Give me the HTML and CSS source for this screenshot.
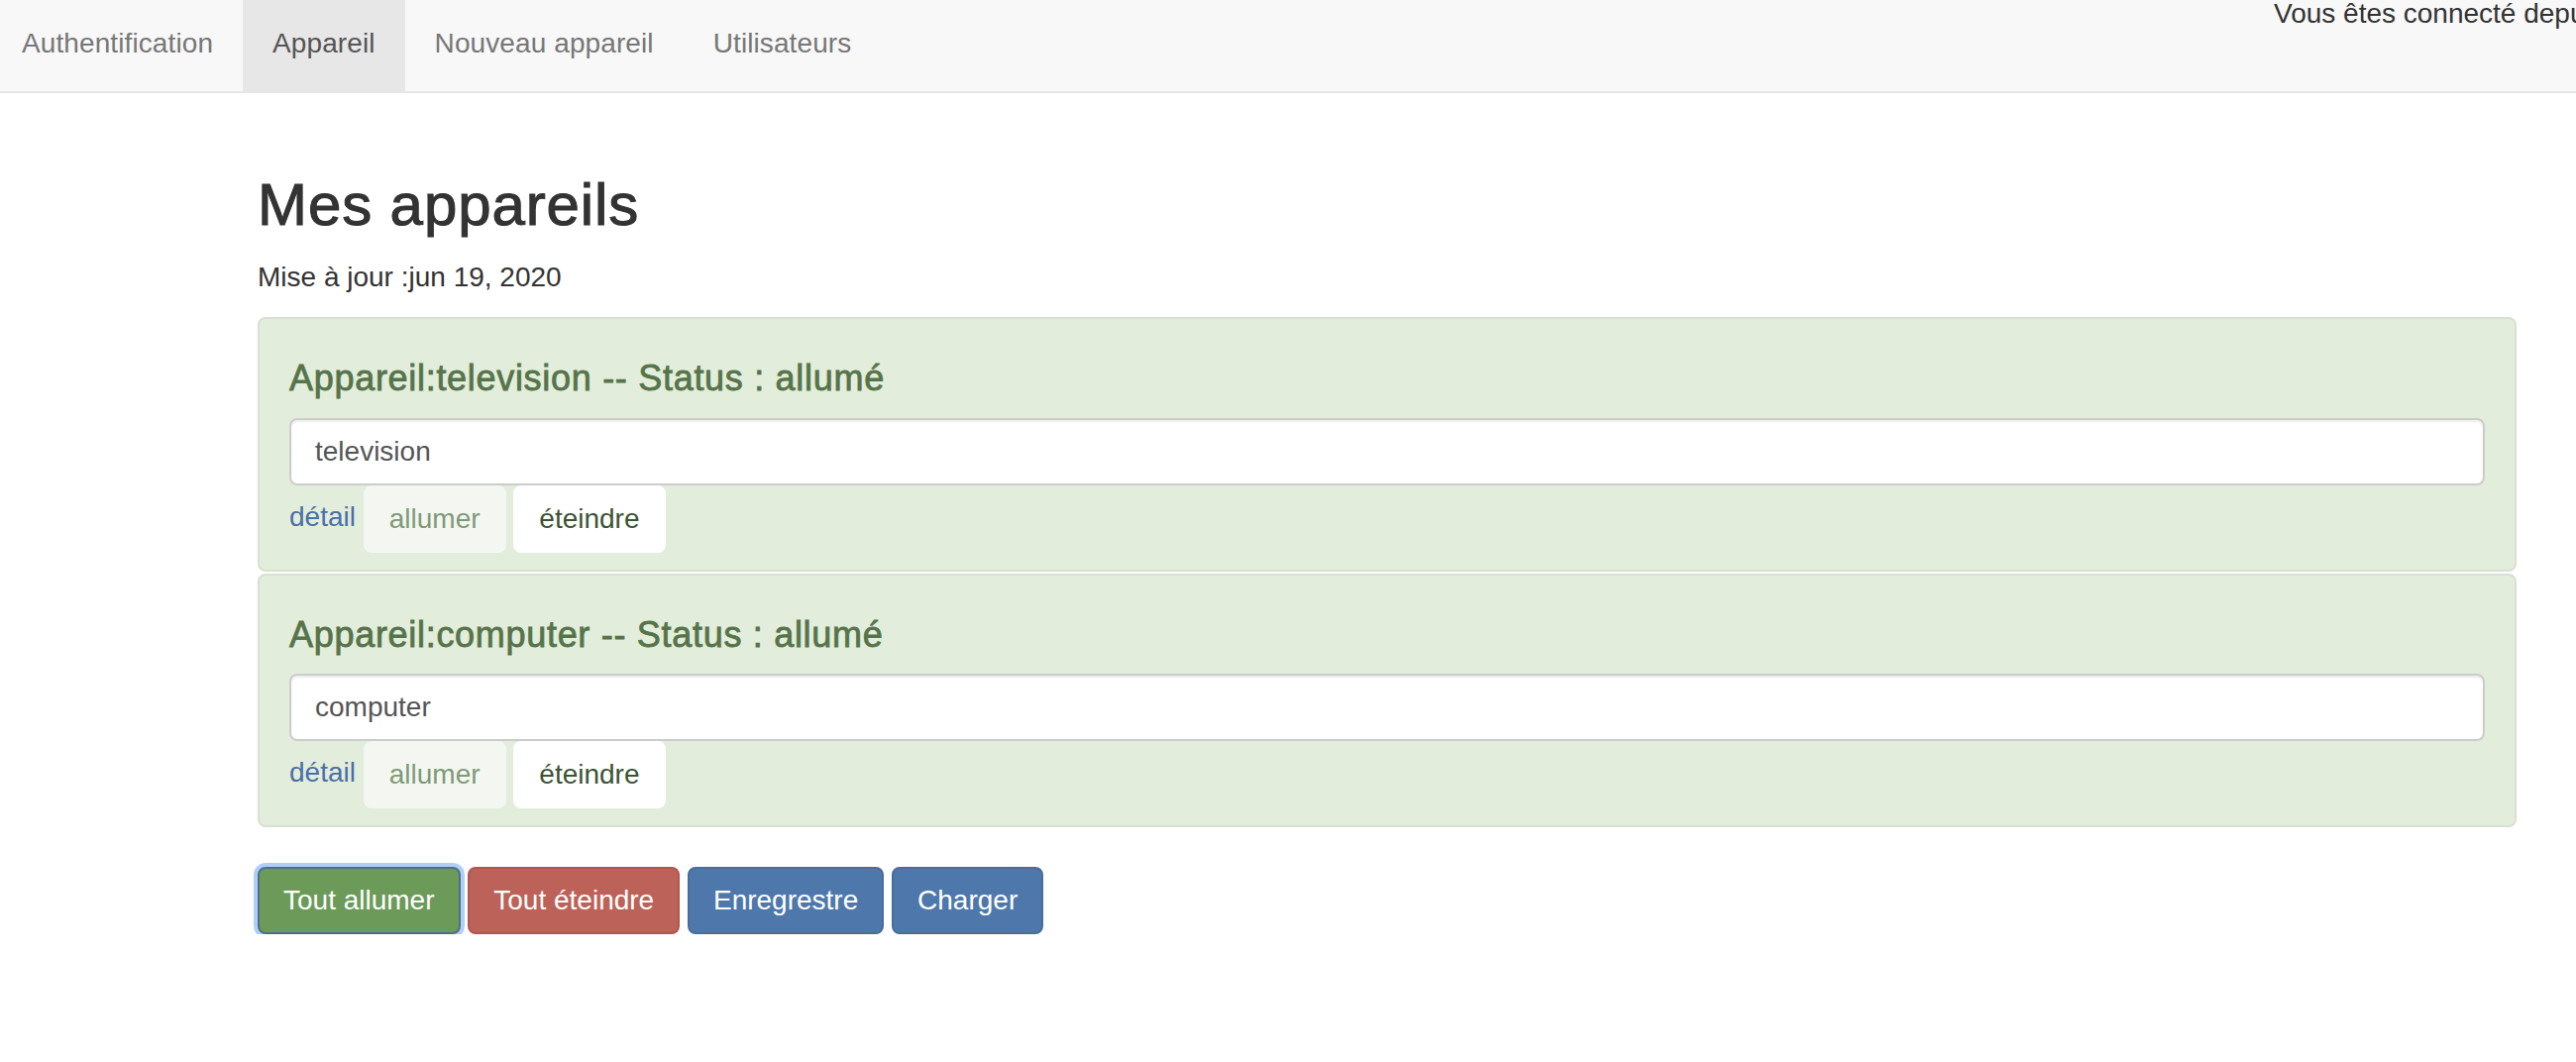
FILE: index.html
```html
<!DOCTYPE html>
<html lang="fr">
<head>
<meta charset="utf-8">
<title>Mes appareils</title>
<link rel="stylesheet" href="styles.css">
</head>
<body>
<nav class="navbar">
  <ul class="nav">
    <li><a href="#">Authentification</a></li>
    <li class="active"><a href="#">Appareil</a></li>
    <li><a href="#">Nouveau appareil</a></li>
    <li><a href="#">Utilisateurs</a></li>
  </ul>
  <p class="navbar-text">Vous êtes connecté depuis 0 secondes</p>
</nav>

<main class="container">
  <h2 class="title">Mes appareils</h2>
  <p class="updated">Mise à jour :jun 19, 2020</p>

  <ul class="list-group">
    <li class="list-item">
      <h4 class="item-heading">Appareil:television -- Status : allumé</h4>
      <input class="form-control" type="text" value="television">
      <div class="actions"><a class="link" href="#">détail</a> <button class="btn btn-off" disabled>allumer</button> <button class="btn btn-white">éteindre</button></div>
    </li>
    <li class="list-item">
      <h4 class="item-heading">Appareil:computer -- Status : allumé</h4>
      <input class="form-control" type="text" value="computer">
      <div class="actions"><a class="link" href="#">détail</a> <button class="btn btn-off" disabled>allumer</button> <button class="btn btn-white">éteindre</button></div>
    </li>
  </ul>

  <div class="toolbar"><button class="btn btn-success is-focused">Tout allumer</button> <button class="btn btn-danger">Tout éteindre</button> <button class="btn btn-primary">Enregrestre</button> <button class="btn btn-primary">Charger</button></div>
</main>
</body>
</html>
```

FILE: styles.css
```css
html, body {
  margin: 0;
  padding: 0;
  background: #ffffff;
  overflow: hidden;
}

body {
  font-family: "Liberation Sans", Arial, Helvetica, sans-serif;
  font-size: 28px;
  line-height: 40px;
  color: #333333;
}

.navbar {
  display: flex;
  height: 92px;
  background: #f8f8f8;
  border-bottom: 2px solid #e7e7e7;
  margin-bottom: 40px;
}

.nav {
  flex: 1;
  display: flex;
  list-style: none;
  margin: 0 0 0 -8px;
  padding: 0;
}

.nav a {
  display: block;
  padding: 24px 30px 28px;
  line-height: 40px;
  letter-spacing: 0.1px;
  color: #777777;
  text-decoration: none;
}

.nav .active a {
  background: #e7e7e7;
  color: #555555;
}

.navbar-text {
  flex: 0 0 305px;
  margin: -6px 0 0;
  white-space: nowrap;
  overflow: hidden;
  color: #333333;
  line-height: 40px;
}

.container {
  display: flow-root;
  margin-left: 260px;
  width: 2280px;
}

.title {
  margin: 40px 0 20px;
  font-size: 60px;
  line-height: 66px;
  font-weight: normal;
  letter-spacing: 0.9px;
  color: #333333;
  -webkit-text-stroke: 1.1px #333333;
}

.updated {
  margin: 0 0 20px;
}

.list-group {
  list-style: none;
  margin: 0 0 40px;
  padding: 0;
}

.list-item {
  background: #e3eddb;
  border: 2px solid #d8e0d1;
  border-radius: 8px;
  padding: 20px 30px 17px;
  margin-bottom: 2px;
}

.list-item:last-child {
  margin-bottom: 0;
}

.item-heading {
  margin: 20px 0 20px;
  font-size: 36px;
  line-height: 39.6px;
  font-weight: normal;
  letter-spacing: 0.7px;
  color: #56744a;
  -webkit-text-stroke: 0.8px #56744a;
}

.form-control {
  display: block;
  box-sizing: border-box;
  width: 100%;
  height: 68px;
  margin: 0;
  padding: 12px 24px;
  font-family: inherit;
  font-size: 28px;
  line-height: 40px;
  color: #555555;
  background: #ffffff;
  border: 2px solid #cccccc;
  border-radius: 8px;
  box-shadow: inset 0 2px 2px rgba(0, 0, 0, 0.075);
}

.link {
  color: #4a70a8;
  text-decoration: none;
}

.btn {
  display: inline-block;
  margin: 0;
  padding: 12px 24px;
  font-family: inherit;
  font-size: 28px;
  line-height: 40px;
  border: 2px solid transparent;
  border-radius: 8px;
  vertical-align: middle;
  cursor: pointer;
}

.btn-off {
  background: #f4f7f1;
  border-color: #f4f7f1;
  color: #7f9a78;
  cursor: not-allowed;
}

.btn-white {
  background: #ffffff;
  border-color: #ffffff;
  color: #3b5434;
}

.btn-success {
  background: #6b9a59;
  border-color: #5f8c4f;
  color: #ffffff;
}

.btn-success.is-focused {
  border-color: #4f6f86;
  box-shadow: 0 0 0 4px rgba(150, 190, 245, 0.75);
}

.btn-danger {
  background: #bc6259;
  border-color: #b3564d;
  color: #ffffff;
}

.btn-primary {
  background: #4e78ab;
  border-color: #476d9c;
  color: #ffffff;
}
```
